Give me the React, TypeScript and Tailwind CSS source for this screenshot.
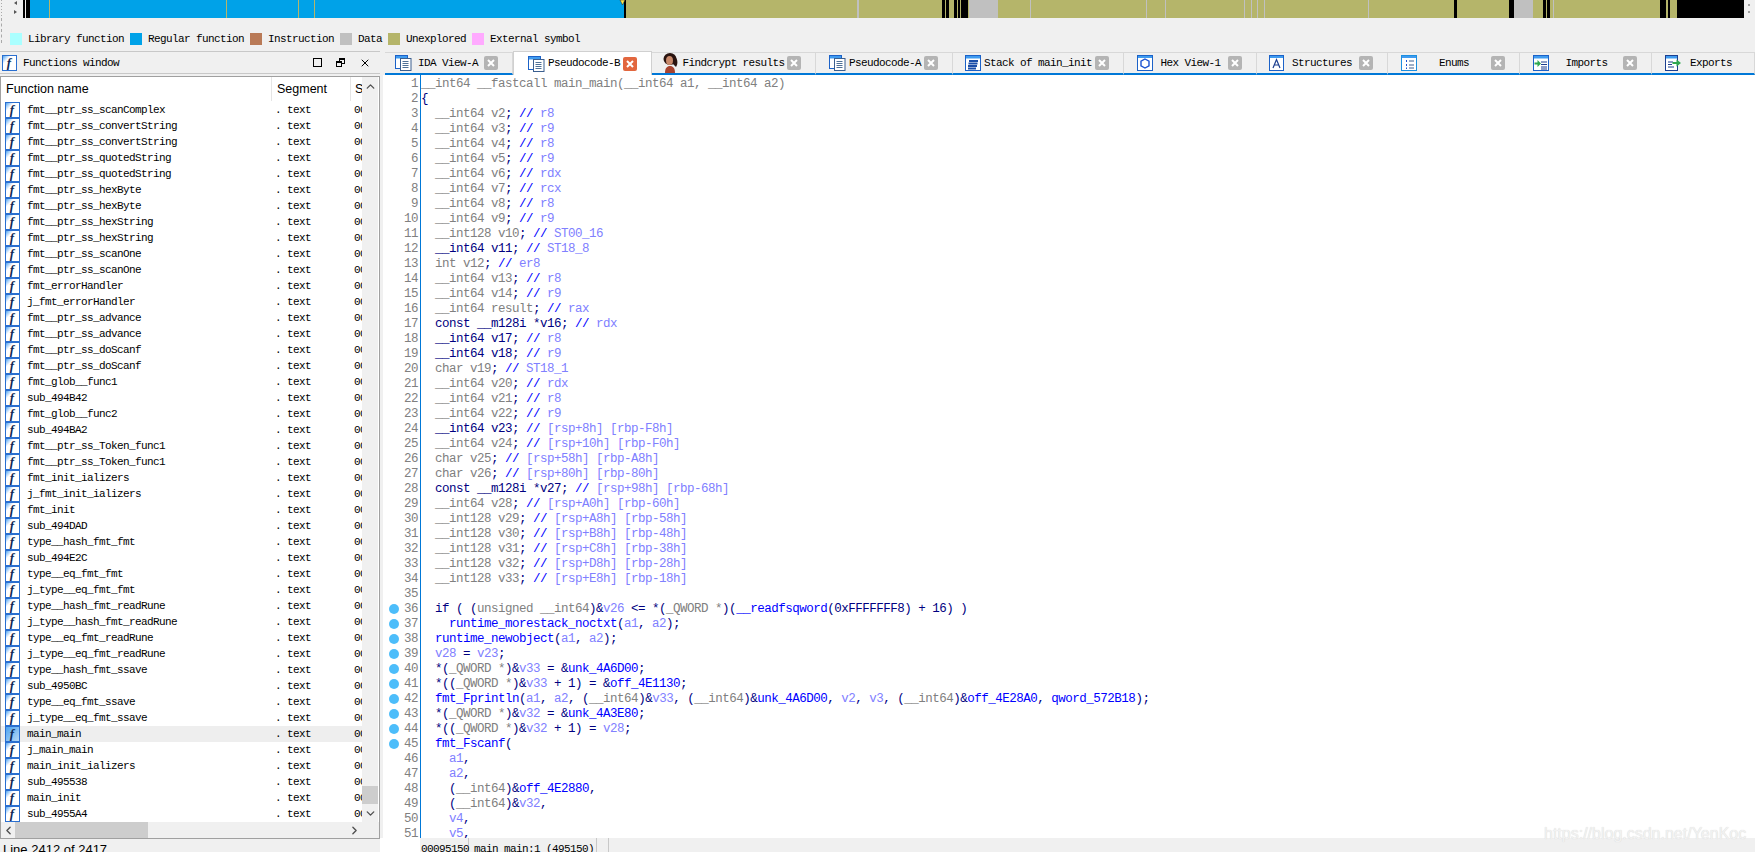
import { ChevronDown, ChevronLeft, ChevronRight, ChevronUp, X } from "lucide-react";

const sim = "font-['Liberation_Mono',monospace] text-[11px] tracking-[-0.6px]";

const legend = [
  { label: "Library function", color: "bg-[#aaffff]" },
  { label: "Regular function", color: "bg-[#00a2e8]" },
  { label: "Instruction", color: "bg-[#b97a57]" },
  { label: "Data", color: "bg-[#c0c0c0]" },
  { label: "Unexplored", color: "bg-[#b5b56a]" },
  { label: "External symbol", color: "bg-[#ffaaff]" },
];

const functions = [
  "fmt__ptr_ss_scanComplex", "fmt__ptr_ss_convertString", "fmt__ptr_ss_convertString", "fmt__ptr_ss_quotedString",
  "fmt__ptr_ss_quotedString", "fmt__ptr_ss_hexByte", "fmt__ptr_ss_hexByte", "fmt__ptr_ss_hexString",
  "fmt__ptr_ss_hexString", "fmt__ptr_ss_scanOne", "fmt__ptr_ss_scanOne", "fmt_errorHandler",
  "j_fmt_errorHandler", "fmt__ptr_ss_advance", "fmt__ptr_ss_advance", "fmt__ptr_ss_doScanf",
  "fmt__ptr_ss_doScanf", "fmt_glob__func1", "sub_494B42", "fmt_glob__func2",
  "sub_494BA2", "fmt__ptr_ss_Token_func1", "fmt__ptr_ss_Token_func1", "fmt_init_ializers",
  "j_fmt_init_ializers", "fmt_init", "sub_494DAD", "type__hash_fmt_fmt",
  "sub_494E2C", "type__eq_fmt_fmt", "j_type__eq_fmt_fmt", "type__hash_fmt_readRune",
  "j_type__hash_fmt_readRune", "type__eq_fmt_readRune", "j_type__eq_fmt_readRune", "type__hash_fmt_ssave",
  "sub_4950BC", "type__eq_fmt_ssave", "j_type__eq_fmt_ssave", "main_main",
  "j_main_main", "main_init_ializers", "sub_495538", "main_init", "sub_4955A4",
];

// ~gray~  ^local var / comment^  `blue name`  everything else navy
const code = [
  "~__int64 __fastcall main_main(__int64 a1, __int64 a2)~",
  "{",
  "  ~__int64 v2~; `//` ^r8^",
  "  ~__int64 v3~; `//` ^r9^",
  "  ~__int64 v4~; `//` ^r8^",
  "  ~__int64 v5~; `//` ^r9^",
  "  ~__int64 v6~; `//` ^rdx^",
  "  ~__int64 v7~; `//` ^rcx^",
  "  ~__int64 v8~; `//` ^r8^",
  "  ~__int64 v9~; `//` ^r9^",
  "  ~__int128 v10~; `//` ^ST00_16^",
  "  __int64 v11; `//` ^ST18_8^",
  "  ~int v12~; `//` ^er8^",
  "  ~__int64 v13~; `//` ^r8^",
  "  ~__int64 v14~; `//` ^r9^",
  "  ~__int64 result~; `//` ^rax^",
  "  const __m128i *v16; `//` ^rdx^",
  "  __int64 v17; `//` ^r8^",
  "  __int64 v18; `//` ^r9^",
  "  ~char v19~; `//` ^ST18_1^",
  "  ~__int64 v20~; `//` ^rdx^",
  "  ~__int64 v21~; `//` ^r8^",
  "  ~__int64 v22~; `//` ^r9^",
  "  __int64 v23; `//` ^[rsp+8h] [rbp-F8h]^",
  "  ~__int64 v24~; `//` ^[rsp+10h] [rbp-F0h]^",
  "  ~char v25~; `//` ^[rsp+58h] [rbp-A8h]^",
  "  ~char v26~; `//` ^[rsp+80h] [rbp-80h]^",
  "  const __m128i *v27; `//` ^[rsp+98h] [rbp-68h]^",
  "  ~__int64 v28~; `//` ^[rsp+A0h] [rbp-60h]^",
  "  ~__int128 v29~; `//` ^[rsp+A8h] [rbp-58h]^",
  "  ~__int128 v30~; `//` ^[rsp+B8h] [rbp-48h]^",
  "  ~__int128 v31~; `//` ^[rsp+C8h] [rbp-38h]^",
  "  ~__int128 v32~; `//` ^[rsp+D8h] [rbp-28h]^",
  "  ~__int128 v33~; `//` ^[rsp+E8h] [rbp-18h]^",
  "",
  "  if ( (~unsigned __int64~)&^v26^ <= *(~_QWORD *~)(`__readfsqword`(0xFFFFFFF8) + 16) )",
  "    `runtime_morestack_noctxt`(^a1^, ^a2^);",
  "  `runtime_newobject`(^a1^, ^a2^);",
  "  ^v28^ = ^v23^;",
  "  *(~_QWORD *~)&^v33^ = &`unk_4A6D00`;",
  "  *((~_QWORD *~)&^v33^ + 1) = &`off_4E1130`;",
  "  `fmt_Fprintln`(^a1^, ^a2^, (~__int64~)&^v33^, (~__int64~)&`unk_4A6D00`, ^v2^, ^v3^, (~__int64~)&`off_4E28A0`, `qword_572B18`);",
  "  *(~_QWORD *~)&^v32^ = &`unk_4A3E80`;",
  "  *((~_QWORD *~)&^v32^ + 1) = ^v28^;",
  "  `fmt_Fscanf`(",
  "    ^a1^,",
  "    ^a2^,",
  "    (~__int64~)&`off_4E2880`,",
  "    (~__int64~)&^v32^,",
  "    ^v4^,",
  "    ^v5^,",
];

function CodeLine({ text }: { text: string }) {
  const parts = text.split(/(~[^~]*~|\^[^^]*\^|`[^`]*`)/).filter(Boolean);
  return (
    <div className="h-[15px] leading-[15px] whitespace-pre">
      {parts.map((p, i) => {
        const inner = p.slice(1, -1);
        if (p[0] === "~") return <span key={i} className="text-[#808080]">{inner}</span>;
        if (p[0] === "^") return <span key={i} className="text-[#8080ff]">{inner}</span>;
        if (p[0] === "`") return <span key={i} className="text-[#0000ff]">{inner}</span>;
        return <span key={i}>{p}</span>;
      })}
    </div>
  );
}

function FnIcon({ selected }: { selected?: boolean }) {
  return (
    <span
      aria-hidden
      className={`flex h-[16px] w-[15px] shrink-0 items-center justify-center overflow-hidden border border-[#2a6fd0] bg-gradient-to-br pr-[1px] font-['Liberation_Serif',serif] text-[13px] leading-[14px] font-bold tracking-normal italic text-[#102a55] ${
        selected ? "from-[#4aa3f0] to-[#b5d8f5]" : "from-[#4aa3f0] via-white via-30% to-white"
      }`}
    >
      f
    </span>
  );
}

function CloseBtn({ active }: { active?: boolean }) {
  return (
    <span className={`flex h-[14px] w-[14px] shrink-0 items-center justify-center rounded-[2px] ${active ? "bg-[#e2673f]" : "bg-[#b4b4b4]"}`}>
      <svg width="8" height="8" viewBox="0 0 8 8">
        <path d="M1 1l6 6M7 1L1 7" stroke="#fff" strokeWidth="2" />
      </svg>
    </span>
  );
}

function DocIcon() {
  return (
    <svg width="17" height="16" viewBox="0 0 17 16" className="shrink-0">
      <rect x="0.5" y="0.5" width="12" height="13" fill="#fff" stroke="#1c62c8" />
      <rect x="1" y="1" width="11" height="2.5" fill="#3f9bf0" />
      <rect x="5.5" y="3.5" width="10.5" height="12" fill="#fff" stroke="#3b5f8f" />
      <path d="M7.5 6.5h6M7.5 8.5h6M7.5 10.5h6M7.5 12.5h6" stroke="#4f7096" />
    </svg>
  );
}

function StackIcon() {
  return (
    <svg width="16" height="16" viewBox="0 0 16 16" className="shrink-0">
      <rect x="0.5" y="0.5" width="15" height="15" fill="#fff" stroke="#1c62c8" />
      <rect x="1" y="1" width="14" height="2.5" fill="#3f9bf0" />
      <path d="M4 6h9M3.5 8.5h9M3 11h9M3 13.5h8" stroke="#1d4fa8" strokeWidth="1.8" />
    </svg>
  );
}

function HexIcon() {
  return (
    <svg width="16" height="16" viewBox="0 0 16 16" className="shrink-0">
      <rect x="0.5" y="0.5" width="15" height="15" fill="#fff" stroke="#1c62c8" />
      <rect x="1" y="1" width="14" height="2" fill="#3f9bf0" />
      <path d="M8 4l4 2.2v4.6L8 13l-4-2.2V6.2z" fill="none" stroke="#1c52d0" strokeWidth="1.4" />
    </svg>
  );
}

function StructIcon() {
  return (
    <svg width="16" height="16" viewBox="0 0 16 16" className="shrink-0">
      <rect x="0.5" y="0.5" width="14" height="15" fill="#fff" stroke="#1c62c8" />
      <rect x="1" y="1" width="13" height="2" fill="#3f9bf0" />
      <path d="M4 13l3.5-8.5L11 13M5.3 10h4.4" fill="none" stroke="#1d3f8f" strokeWidth="1.2" />
    </svg>
  );
}

function EnumIcon() {
  return (
    <svg width="16" height="16" viewBox="0 0 16 16" className="shrink-0">
      <rect x="0.5" y="0.5" width="15" height="15" fill="#fff" stroke="#1c8fe0" />
      <rect x="1" y="1" width="14" height="2" fill="#3f9bf0" />
      <path d="M5 5h1v2H5zM5 9h1v2H5zM5 12.5h1v1.5H5z" fill="#1c52d0" />
      <path d="M8 6h5M8 10h5M8 13h5" stroke="#3b5f8f" />
    </svg>
  );
}

function ImportIcon() {
  return (
    <svg width="17" height="16" viewBox="0 0 17 16" className="shrink-0">
      <rect x="0.5" y="0.5" width="15" height="15" fill="#fff" stroke="#1c62c8" />
      <rect x="1" y="1" width="14" height="2.5" fill="#3f9bf0" />
      <path d="M8 7h6M8 9.5h6M8 12h6M8 14h6" stroke="#1d3f8f" />
      <path d="M1.5 7.5h3V5l3.5 3.5L4.5 12V9.5h-3z" fill="#2fa84f" />
    </svg>
  );
}

function ExportIcon() {
  return (
    <svg width="17" height="16" viewBox="0 0 17 16" className="shrink-0">
      <rect x="0.5" y="0.5" width="12" height="15" fill="#fff" stroke="#1c3f90" />
      <rect x="1" y="1" width="11" height="2.5" fill="#3f9bf0" />
      <path d="M3 7h5M3 9.5h4M3 12h6" stroke="#1d3f8f" />
      <path d="M7.5 7h4V4.5L16 8l-4.5 3.5V9h-4z" fill="#2fa84f" />
    </svg>
  );
}

function FaceIcon() {
  return (
    <svg width="19" height="20" viewBox="0 0 19 20" className="shrink-0">
      <ellipse cx="9" cy="6" rx="6.5" ry="6" fill="#2a1410" />
      <path d="M14 4c3 2 3 7 1 10l-3-3z" fill="#2a1410" />
      <ellipse cx="8.5" cy="7.5" rx="3.5" ry="4.5" fill="#c98a6c" />
      <path d="M4 20c0-5 2-7 5-7s5 2 5 7z" fill="#a8432f" />
    </svg>
  );
}

const tabs = [
  { label: "IDA View-A", icon: <DocIcon />, width: "w-[128px] pl-[10px]" },
  { label: "Pseudocode-B", icon: <DocIcon />, width: "w-[139px] pl-[14px]", active: true },
  { label: "Findcrypt results", icon: <FaceIcon />, width: "w-[164px] pl-[9px]" },
  { label: "Pseudocode-A", icon: <DocIcon />, width: "w-[137px] pl-[13px]" },
  { label: "Stack of main_init", icon: <StackIcon />, width: "w-[171px] pl-[12px]" },
  { label: "Hex View-1", icon: <HexIcon />, width: "w-[133px] pl-[13px]" },
  { label: "Structures", icon: <StructIcon />, width: "w-[131px] pl-[12px]" },
  { label: "Enums", icon: <EnumIcon />, width: "w-[132px] pl-[13px]" },
  { label: "Imports", icon: <ImportIcon />, width: "w-[132px] pl-[13px]" },
  { label: "Exports", icon: <ExportIcon />, width: "flex-1 pl-[13px]", noClose: true },
];

// navigation band: [x, width, colour]
const blue = "#00a2e8";
const olive = "#b5b56a";
const band: [number, number, string][] = [
  [23, 2, "#000"], [26, 4, "#000"], [30, 594, blue],
  [49, 1, "#b5b56a"], [226, 1, "#b5b56a"], [298, 1, "#b5b56a"], [314, 1, "#b5b56a"],
  [624, 2, "#000"], [626, 1118, olive],
  [857, 2, "#c0c0c0"], [942, 3, "#000"], [946, 3, "#000"], [954, 3, "#000"], [958, 2, "#000"], [961, 7, "#000"],
  [969, 29, "#c0c0c0"], [1030, 1, "#c0c0c0"], [1146, 1, "#c0c0c0"], [1165, 1, "#c0c0c0"], [1244, 1, "#c0c0c0"],
  [1251, 1, "#c0c0c0"], [1257, 1, "#c0c0c0"], [1264, 1, "#c0c0c0"], [1368, 1, "#c0c0c0"],
  [1454, 3, "#000"], [1509, 5, "#000"], [1514, 19, "#c0c0c0"], [1543, 3, "#000"], [1547, 3, "#000"], [1553, 1, "#c0c0c0"],
  [1660, 6, "#000"], [1668, 2, "#000"], [1677, 67, "#000"],
];

function NavBand() {
  return (
    <svg width="1755" height="18" viewBox="0 0 1755 18" className="block shrink-0">
      <rect width="1755" height="18" fill="#f0f0f0" />
      {band.map(([x, w, c], i) => (
        <rect key={i} x={x} y="0" width={w} height="18" fill={c} />
      ))}
      <path d="M17 1l-3 2 3 2zM14 10l3 2-3 2z" fill="#555" />
      <path d="M1.5 0v18" stroke="#aaa" strokeDasharray="1 2" />
      <path d="M620 0h5l-2.5 5z" fill="#ffe94d" stroke="#222" strokeWidth="0.5" />
      <path d="M1749 4v2M1749 11v2" stroke="#555" />
    </svg>
  );
}

export default function App() {
  return (
    <div className="flex h-[852px] w-full flex-col overflow-hidden bg-[#f0f0f0] text-black">
      <NavBand />

      <div className={`flex h-[33px] shrink-0 items-start leading-[11px] ${sim}`}>
        <span className="ml-[1px] h-[25px] w-0 border-l border-dashed border-[#aaaaaa]" />
        <div className="flex items-start gap-[6px] pt-[15px] pl-[8px]">
          {legend.map((l) => (
            <div key={l.label} className="flex items-center gap-[6px]">
              <span className={`h-[12px] w-[12px] ${l.color}`} />
              <span>{l.label}</span>
            </div>
          ))}
        </div>
      </div>

      <div className="flex min-h-0 flex-1">
        {/* left: functions window */}
        <div className="flex w-[380px] shrink-0 flex-col">
          <div className="flex h-[23px] shrink-0 items-center border-y border-[#c8c8c8] pl-[2px]">
            <FnIcon />
            <span className={`ml-[6px] pt-[2px] ${sim}`}>Functions window</span>
            <div className="ml-auto flex items-center gap-[14px] pr-[9px]">
              <span className="h-[9px] w-[9px] border-[1.5px] border-black" />
              <span className="relative h-[9px] w-[9px]">
                <span className="absolute top-0 right-0 h-[6px] w-[6px] border border-t-2 border-black" />
                <span className="absolute bottom-0 left-0 h-[6px] w-[6px] border border-t-2 border-black bg-[#f0f0f0]" />
              </span>
              <X size={12} strokeWidth={2} />
            </div>
          </div>

          <div className="mt-[2px] flex h-[763px] shrink-0 border border-[#a0a0a0] bg-white">
            <div className="flex min-w-0 flex-1 flex-col">
              <div className="flex min-h-0 flex-1">
                <div className="w-[361px] shrink-0 overflow-hidden">
                  <div className="flex h-[25px] items-center pb-[1px] font-['Liberation_Sans',sans-serif] text-[12.5px]">
                    <div className="flex h-full w-[271px] shrink-0 items-center border-r border-[#e5e5e5] pl-[5px]">Function name</div>
                    <div className="flex h-full w-[79px] shrink-0 items-center border-r border-[#e5e5e5] pl-[5px]">Segment</div>
                    <div className="pl-[4px]">S</div>
                  </div>
                  {functions.map((name, i) => {
                    const selected = name === "main_main";
                    return (
                      <div key={i} className={`flex h-[16px] items-center ${sim} ${selected ? "bg-[#eeeeee]" : ""}`}>
                        <span className="ml-[4px]"><FnIcon selected={selected} /></span>
                        <span className="ml-[7px] w-[248px] shrink-0">{name}</span>
                        <span className="w-[79px] shrink-0">. text</span>
                        <span>00</span>
                      </div>
                    );
                  })}
                </div>
                <div className="flex w-[16px] shrink-0 flex-col items-center bg-[#f0f0f0] text-[#505050]">
                  <ChevronUp size={13} strokeWidth={2.5} className="mt-[3px]" />
                  <div className="mt-auto h-[18px] w-full bg-[#cdcdcd]" />
                  <ChevronDown size={13} strokeWidth={2.5} className="mt-[3px] mb-[2px]" />
                </div>
              </div>
              <div className="flex h-[16px] shrink-0 items-center bg-[#f0f0f0] text-[#505050]">
                <ChevronLeft size={13} strokeWidth={2.5} className="ml-[1px]" />
                <div className="h-full w-[133px] bg-[#cdcdcd]" />
                <ChevronRight size={13} strokeWidth={2.5} className="mr-[18px] ml-auto" />
              </div>
            </div>
          </div>

          <div className="h-[14px] overflow-hidden pt-[3px] pl-[3px] font-['Liberation_Sans',sans-serif] text-[13px] leading-[15px]">
            Line 2412 of 2417
          </div>
        </div>

        {/* right: tabs and pseudocode */}
        <div className="flex min-w-0 flex-1 flex-col">
          <div className={`flex h-[24px] shrink-0 pl-[5px] ${sim}`}>
            {tabs.map((t) => (
              <div
                key={t.label}
                className={`flex shrink-0 items-center pr-[14px] ${t.width} ${
                  t.active
                    ? "h-[24px] border-x border-t border-[#d0d0d0] bg-white"
                    : "mt-[1px] h-[23px] border-t border-r border-b-2 border-t-[#d8d8d8] border-r-[#d8d8d8] border-b-[#0078d7]"
                }`}
              >
                {t.icon}
                <span className="flex-1 text-center">{t.label}</span>
                {!t.noClose && <CloseBtn active={t.active} />}
              </div>
            ))}
          </div>

          <div className="flex min-h-0 flex-1 pl-[3px] font-['Liberation_Mono',monospace] text-[12.5px] tracking-[-0.5px] text-[#000080]">
            <div className="w-[37px] shrink-0 overflow-hidden bg-white pt-[2px] text-right text-[#808080]">
              {code.map((_, i) => (
                <div key={i} className="relative h-[15px] pr-[2px] leading-[15px]">
                  {i >= 35 && i <= 44 && (
                    <span className="absolute top-[2px] left-[6px] h-[10px] w-[10px] rounded-full bg-[#4dbdfa]" />
                  )}
                  {i + 1}
                </div>
              ))}
            </div>
            <div className="min-w-0 flex-1 overflow-hidden border-l border-[#0078d7] bg-white pt-[2px]">
              {code.map((line, i) => (
                <CodeLine key={i} text={line} />
              ))}
            </div>
          </div>

          <div className={`flex h-[14px] shrink-0 overflow-hidden leading-[12px] ${sim}`}>
            <div className="h-full w-[40px] bg-white" />
            <span className="h-full w-[49px] border-r border-[#c8c8c8] pt-[5px] pl-[1px]">00095150</span>
            <span className="h-full w-[128px] border-r border-[#c8c8c8] pt-[5px] pl-[5px]">main_main:1 (495150)</span>
            <span className="h-full w-[12px] border-r border-[#c8c8c8]" />
          </div>
        </div>
      </div>

      <div className="absolute top-[825px] left-[1544px] font-['Liberation_Sans',sans-serif] text-[16px] leading-[18px] text-[#f2f2f2] [text-shadow:0_0_1px_#cfcfcf]">
        https://blog.csdn.net/YenKoc
      </div>
    </div>
  );
}
